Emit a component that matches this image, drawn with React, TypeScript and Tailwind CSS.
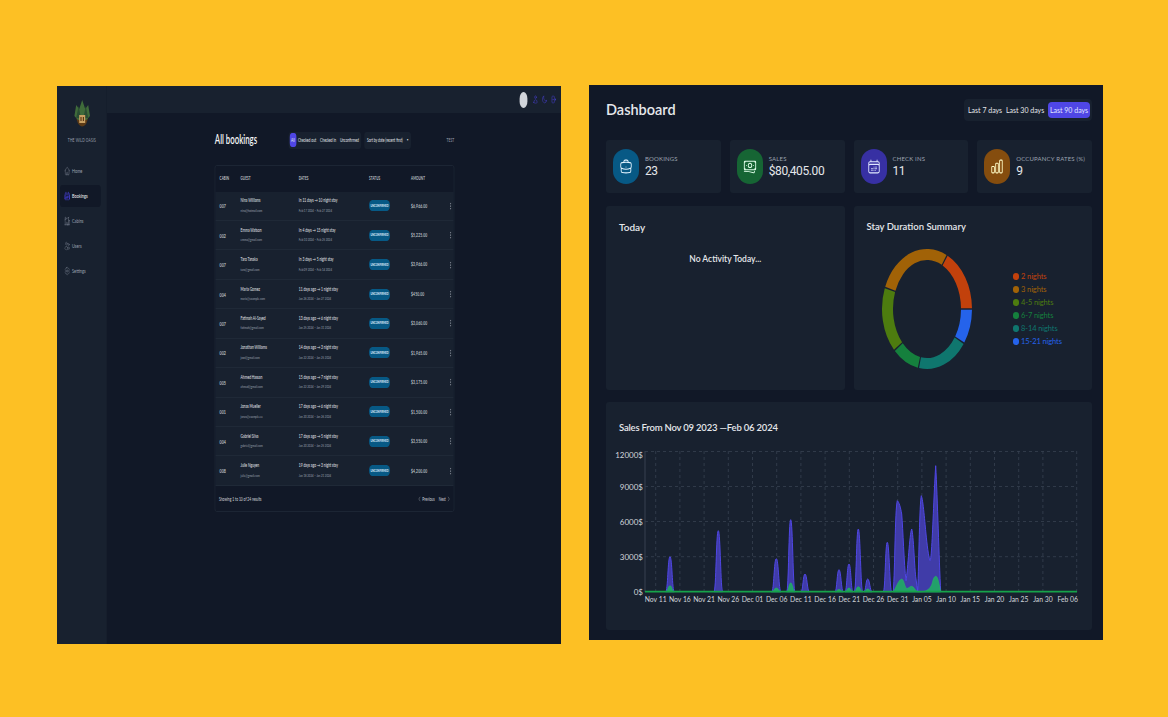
import React from 'react'
import {
  HiOutlineArrowRightOnRectangle,
  HiOutlineBanknotes,
  HiOutlineBriefcase,
  HiOutlineCalendarDays,
  HiOutlineChartBar,
  HiOutlineChevronLeft,
  HiOutlineChevronRight,
  HiOutlineCog6Tooth,
  HiOutlineEllipsisVertical,
  HiOutlineHome,
  HiOutlineHomeModern,
  HiOutlineMoon,
  HiOutlineUser,
  HiOutlineUsers,
} from 'react-icons/hi2'

const FONT = 'font-["Lato","Liberation_Sans",sans-serif]'

const NAV = [
  { label: 'Home', icon: HiOutlineHome },
  { label: 'Bookings', icon: HiOutlineCalendarDays, active: true },
  { label: 'Cabins', icon: HiOutlineHomeModern },
  { label: 'Users', icon: HiOutlineUsers },
  { label: 'Settings', icon: HiOutlineCog6Tooth },
]

const BOOKINGS = [
  ['007', 'Nina Williams', 'nina@hotmail.com', 'In 11 days → 10 night stay', 'Feb 17 2024 – Feb 27 2024', '$6,966.00'],
  ['002', 'Emma Watson', 'emma@gmail.com', 'In 4 days → 15 night stay', 'Feb 10 2024 – Feb 25 2024', '$5,225.00'],
  ['007', 'Taro Tanaka', 'taro@gmail.com', 'In 3 days → 5 night stay', 'Feb 09 2024 – Feb 14 2024', '$3,966.00'],
  ['004', 'Maria Gomez', 'maria@example.com', '11 days ago → 1 night stay', 'Jan 26 2024 – Jan 27 2024', '$450.00'],
  ['007', 'Fatimah Al-Sayed', 'fatimah@gmail.com', '13 days ago → 6 night stay', 'Jan 25 2024 – Jan 31 2024', '$3,060.00'],
  ['002', 'Jonathan Williams', 'jowi@gmail.com', '14 days ago → 3 night stay', 'Jan 22 2024 – Jan 25 2024', '$1,965.00'],
  ['005', 'Ahmed Hassan', 'ahmed@gmail.com', '15 days ago → 7 night stay', 'Jan 22 2024 – Jan 29 2024', '$3,175.00'],
  ['001', 'Jonas Mueller', 'jonas@example.eu', '17 days ago → 6 night stay', 'Jan 20 2024 – Jan 26 2024', '$1,500.00'],
  ['004', 'Gabriel Silva', 'gabriel@gmail.com', '17 days ago → 5 night stay', 'Jan 20 2024 – Jan 25 2024', '$3,550.00'],
  ['008', 'Julie Nguyen', 'julie@gmail.com', '19 days ago → 3 night stay', 'Jan 18 2024 – Jan 21 2024', '$4,200.00'],
]

const STATS = [
  { label: 'Bookings', value: '23', icon: HiOutlineBriefcase, circle: 'bg-[#075985] text-[#e0f2fe]' },
  { label: 'Sales', value: '$80,405.00', icon: HiOutlineBanknotes, circle: 'bg-[#166534] text-[#dcfce7]' },
  { label: 'Check ins', value: '11', icon: HiOutlineCalendarDays, circle: 'bg-[#3730a3] text-[#e0e7ff]' },
  { label: 'Occupancy rates (%)', value: '9', icon: HiOutlineChartBar, circle: 'bg-[#854d0e] text-[#fef9c3]' },
]

const SLICES = [
  { label: '2 nights', color: '#c2410c', from: 0, to: 63.5 },
  { label: '3 nights', color: '#a16207', from: 63.5, to: 159 },
  { label: '4-5 nights', color: '#4d7c0f', from: 159, to: 223.6 },
  { label: '6-7 nights', color: '#15803d', from: 223.6, to: 259 },
  { label: '8-14 nights', color: '#0f766e', from: 259, to: 325.2 },
  { label: '15-21 nights', color: '#2563eb', from: 325.2, to: 360 },
]

// x0, peak x, x1, peak y, in page pixels
const BLUE: number[][] = [
  [665.7, 670, 674.3, 557.7],
  [714, 718.3, 722.7, 531.7],
  [771.7, 776.3, 781, 559.7],
  [786.7, 790.7, 795, 520.7],
  [801, 805, 809.3, 575],
  [835, 839, 843.3, 570.7],
  [845, 849, 853, 565],
  [854.3, 858.3, 862.7, 530],
  [864, 867.7, 872, 580],
  [883.3, 887.3, 891.7, 543.3],
]

const GREEN: number[][] = [
  [665.7, 670, 674.3, 586.7],
  [771.7, 776.3, 781, 589],
  [786.7, 790.7, 795, 584],
  [835, 839, 843.3, 590.5],
  [845, 849, 853, 589],
  [854.3, 858.3, 862.7, 587.7],
  [864, 867.7, 872, 590],
]

const BASE = 592.7

const BLUE_CLUSTER = `M893.3 ${BASE} C895 570 895 510 897.3 501.7 C899 503 900.5 508 901.7 515 C903 530 904 565 906 581.7 C908 570 909.5 535 911.7 530 C913.5 535 914.5 570 916 580 L917.7 ${BASE} C919 560 919.5 505 921.3 496.7 C923 500 925 525 926 535 C927 545 928.5 558 930 561.7 C932 562 933.5 500 935.7 466.7 C937.5 500 939 560 940.7 ${BASE} Z`
const GREEN_CLUSTER = `M893 ${BASE} C896 590 898 581 901.7 580 C904 580 905 590 907 589.5 C909 589 910 587.3 911.7 587.3 C914 587.3 915 592 918 ${BASE} L922 ${BASE} C927 592 930 590 932 585 C933 581 934 577.3 935.7 577.3 C938 577.3 939 585 940.7 ${BASE} Z`

const spike = ([x0, xp, x1, yp]: number[]) => {
  const d = (xp - x0) / 2
  return `M${x0} ${BASE} C${x0 + d} ${BASE} ${xp - d} ${yp} ${xp} ${yp} C${xp + d} ${yp} ${x1 - d} ${BASE} ${x1} ${BASE} Z`
}

const X_LABELS = ['Nov 11', 'Nov 16', 'Nov 21', 'Nov 26', 'Dec 01', 'Dec 06', 'Dec 11', 'Dec 16', 'Dec 21', 'Dec 26', 'Dec 31', 'Jan 05', 'Jan 10', 'Jan 15', 'Jan 20', 'Jan 25', 'Jan 30']
const Y_LABELS = [
  ['12000$', 459],
  ['9000$', 490.7],
  ['6000$', 525.5],
  ['3000$', 560.7],
  ['0$', 596],
] as const

// the donut is stretched in the reference, so radii differ per axis
const polar = (rx: number, ry: number, deg: number) => {
  const a = (deg * Math.PI) / 180
  return `${50 + rx * Math.cos(a)} ${65 - ry * Math.sin(a)}`
}

const arc = (from: number, to: number) => {
  const a = from + 0.8
  const b = to - 0.8
  const large = b - a > 180 ? 1 : 0
  return `M${polar(45, 60, a)} A45 60 0 ${large} 0 ${polar(45, 60, b)} L${polar(34, 49, b)} A34 49 0 ${large} 1 ${polar(34, 49, a)} Z`
}

const Logo = () => (
  <svg viewBox="0 0 30 30" preserveAspectRatio="none" className="h-[30px] w-[30px]">
    <path d="M5 17 C7 31 23 31 25 17 Z" fill="#5b3a16" />
    <path d="M15 1 L20 10 L25 6 L28 17 L22 21 L8 21 L2 17 L5 6 L10 10 Z" fill="#3f6b3a" />
    <path d="M9 7 L13 19 L5 19 Z M21 7 L25 19 L17 19 Z" fill="#2a4d33" />
    <rect x="10" y="16" width="10" height="8" fill="#c9a063" />
    <rect x="12" y="18" width="2" height="4" fill="#5b3a16" />
    <rect x="16" y="18" width="2" height="4" fill="#5b3a16" />
  </svg>
)

const BookingsPanel = () => (
  <div className="mt-px h-[558px] w-[504px] shrink-0 overflow-hidden">
    {/* the reference shows this page squeezed sideways */}
    <div className="flex h-[558px] w-[840px] origin-top-left scale-x-[0.6] bg-[#111827] text-[#e5e7eb]">
      <aside className="flex w-[83px] shrink-0 flex-col items-center bg-[#18212f] pt-[13px]">
        <Logo />
        <p className="mt-[7px] text-[5.5px] tracking-[0.05em] text-[#9ca3af]">THE WILD OASIS</p>
        <nav className="mt-[16px] flex w-full flex-col gap-[3.3px] pl-[5px] pr-[10px]">
          {NAV.map((item) => (
            <div
              key={item.label}
              className={`flex h-[21.7px] items-center gap-[3px] rounded-sm pl-[7px] text-[6.5px] ${
                item.active ? 'bg-[#111827] text-[#f3f4f6]' : 'text-[#9ca3af]'
              }`}
            >
              <item.icon className={`h-[10px] w-[10px] ${item.active ? 'text-[#4f46e5]' : 'text-[#6b7280]'}`} />
              {item.label}
            </div>
          ))}
        </nav>
      </aside>

      <div className="flex min-w-0 flex-1 flex-col">
        <header className="flex h-[27px] items-center justify-end bg-[#18212f] pr-[8px]">
          <div className="mr-[9px] h-[16px] w-[13px] rounded-full bg-[#d1d5db]" />
          <div className="flex gap-[6px] text-[#4f46e5]">
            <HiOutlineUser className="h-[9px] w-[9px]" />
            <HiOutlineMoon className="h-[9px] w-[9px]" />
            <HiOutlineArrowRightOnRectangle className="h-[9px] w-[9px]" />
          </div>
        </header>

        <main className="flex flex-1 flex-col pl-[180px] pr-[178px] pt-[18px]">
          <div className="flex h-[18px] items-center">
            <h1 className="w-[122.5px] shrink-0 text-[13px] font-semibold text-[#f3f4f6]">All bookings</h1>
            <div className="flex h-[17px] w-[121px] shrink-0 items-center rounded-sm bg-[#18212f] pl-[2px] text-[5.5px] text-[#e5e7eb]">
              <span className="flex h-[14px] w-[11px] items-center justify-center rounded-sm bg-[#4f46e5]">All</span>
              <span className="ml-[3px] w-[37px] whitespace-nowrap">Checked out</span>
              <span className="w-[33px] whitespace-nowrap">Checked in</span>
              <span className="whitespace-nowrap">Unconfirmed</span>
            </div>
            <div className="ml-[5px] flex h-[17px] w-[78px] shrink-0 items-center justify-between rounded-sm bg-[#18212f] px-[5px] text-[5.5px] text-[#e5e7eb]">
              <span className="whitespace-nowrap">Sort by date (recent first)</span>
              <span className="text-[4px]">▾</span>
            </div>
            <span className="ml-auto text-[5.5px] text-[#9ca3af]">TEST</span>
          </div>

          <section className="mt-[16px] h-[347px] overflow-hidden rounded-[3px] border border-[#1f2937]">
            <div className="grid h-[25.5px] grid-cols-[35px_97px_117px_70px_61px_1fr] items-center bg-[#111827] pl-[7px] text-[5px] font-semibold uppercase tracking-[0.03em] text-[#d1d5db]">
              <span>Cabin</span>
              <span>Guest</span>
              <span>Dates</span>
              <span>Status</span>
              <span>Amount</span>
              <span />
            </div>
            {BOOKINGS.map((row, i) => (
              <div
                key={i}
                className="grid h-[29.45px] grid-cols-[35px_97px_117px_70px_61px_1fr] items-center border-b border-[#1f2937] bg-[#18212f] pl-[7px]"
              >
                <span className="text-[6px] font-semibold text-[#d1d5db]">{row[0]}</span>
                <div className="flex flex-col gap-[5px] leading-none">
                  <span className="whitespace-nowrap text-[5.5px] text-[#e5e7eb]">{row[1]}</span>
                  <span className="whitespace-nowrap text-[4.5px] text-[#9ca3af]">{row[2]}</span>
                </div>
                <div className="flex flex-col gap-[5px] leading-none">
                  <span className="whitespace-nowrap text-[5.5px] text-[#e5e7eb]">{row[3]}</span>
                  <span className="whitespace-nowrap text-[4.5px] text-[#9ca3af]">{row[4]}</span>
                </div>
                <span className="flex h-[11px] w-[35px] items-center justify-center rounded-full bg-[#075985] text-[4px] font-bold text-[#e0f2fe]">
                  UNCONFIRMED
                </span>
                <span className="whitespace-nowrap text-[5.5px] font-semibold tracking-[0.05em] text-[#d1d5db]">{row[5]}</span>
                <HiOutlineEllipsisVertical className="h-[10px] w-[10px] text-[#9ca3af]" />
              </div>
            ))}
            <div className="flex h-[26px] items-center justify-between bg-[#111827] pl-[6px] pr-[5px] text-[5.5px] text-[#d1d5db]">
              <span>Showing 1 to 10 of 24 results</span>
              <div className="flex items-center gap-[7px]">
                <span className="flex items-center gap-[2px]">
                  <HiOutlineChevronLeft className="h-[6px] w-[6px]" />
                  Previous
                </span>
                <span className="flex items-center gap-[2px]">
                  Next
                  <HiOutlineChevronRight className="h-[6px] w-[6px]" />
                </span>
              </div>
            </div>
          </section>
        </main>
      </div>
    </div>
  </div>
)

const SalesChart = () => (
  <svg viewBox="606 445 486 165" className="mt-[9px] block h-[165px] w-[486px]">
    <g stroke="#374151" strokeWidth="0.8" strokeDasharray="3 3">
      {[452.5, 487.5, 522.5, 557.7].map((y) => (
        <line key={y} x1="645" x2="1077" y1={y} y2={y} />
      ))}
      {X_LABELS.map((_, i) => (
        <line key={i} x1={655.7 + 24.2 * i} x2={655.7 + 24.2 * i} y1="452" y2="593" />
      ))}
      <line x1="1076.7" x2="1076.7" y1="452" y2="593" />
    </g>
    <line x1="645" x2="645" y1="452" y2="593" stroke="#374151" />
    <g fill="#403ca8" stroke="#4f46e5" strokeWidth="1">
      {BLUE.map((p) => (
        <path key={p[1]} d={spike(p)} />
      ))}
      <path d={BLUE_CLUSTER} />
    </g>
    <g fill="#23a06a" stroke="#22c55e" strokeWidth="0.5">
      {GREEN.map((p) => (
        <path key={p[1]} d={spike(p)} />
      ))}
      <path d={GREEN_CLUSTER} />
    </g>
    <line x1="645" x2="1077" y1={BASE} y2={BASE} stroke="#16a34a" strokeWidth="1.8" />
    <g fill="#d1d5db" fontSize="8" textAnchor="end">
      {Y_LABELS.map(([t, y]) => (
        <text key={t} x="643" y={y}>
          {t}
        </text>
      ))}
    </g>
    <g fill="#d1d5db" fontSize="6.8" textAnchor="middle">
      {X_LABELS.map((t, i) => (
        <text key={t} x={655.7 + 24.2 * i} y="603">
          {t}
        </text>
      ))}
      <text x="1078" y="603" textAnchor="end">
        Feb 06
      </text>
    </g>
  </svg>
)

const DashboardPanel = () => (
  <div className="flex h-[555px] w-[514px] shrink-0 flex-col bg-[#111827] pl-[17px] pr-[11px] pt-[14px] text-[#e5e7eb]">
    <div className="flex h-[22px] items-center justify-between">
      <h1 className="text-[14.5px] font-semibold text-[#e5e7eb]">Dashboard</h1>
      <div className="flex h-[22px] w-[128px] items-center justify-between rounded-sm bg-[#18212f] pl-[4px] pr-[2px] text-[7px]">
        <span className="whitespace-nowrap">Last 7 days</span>
        <span className="whitespace-nowrap">Last 30 days</span>
        <span className="flex h-[16px] w-[42px] items-center justify-center whitespace-nowrap rounded-sm bg-[#4f46e5] text-[#e0e7ff]">Last 90 days</span>
      </div>
    </div>

    <div className="mt-[19px] grid h-[53px] grid-cols-4 gap-[9px]">
      {STATS.map((s) => (
        <div key={s.label} className="flex items-center gap-[6px] rounded-[3px] bg-[#18212f] pl-[7px]">
          <div className={`flex h-[35px] w-[26px] shrink-0 items-center justify-center rounded-full ${s.circle}`}>
            <s.icon preserveAspectRatio="none" className="h-[17px] w-[14px]" />
          </div>
          <div className="flex flex-col gap-px">
            <span className="whitespace-nowrap text-[6px] uppercase leading-[8px] tracking-[0.03em] text-[#9ca3af]">{s.label}</span>
            <span className="font-['Roboto',sans-serif] text-[12px] leading-[15px] tracking-[-0.4px] text-[#e5e7eb]">{s.value}</span>
          </div>
        </div>
      ))}
    </div>

    <div className="mt-[13px] grid h-[184px] grid-cols-2 gap-[9px]">
      <div className="rounded-[3px] bg-[#18212f] pl-[13px] pt-[14px]">
        <h2 className="text-[10px] font-semibold leading-[14px] text-[#e5e7eb]">Today</h2>
        <p className="mt-[19px] pr-[13px] text-center text-[8.5px] font-semibold leading-[12px]">No Activity Today...</p>
      </div>
      <div className="rounded-[3px] bg-[#18212f] pt-[14px]">
        <h2 className="pl-[13px] text-[9.5px] font-semibold leading-[14px] text-[#e5e7eb]">Stay Duration Summary</h2>
        <div className="mt-[10px] flex items-center">
          <svg viewBox="0 0 100 130" className="ml-[23px] h-[130px] w-[100px] shrink-0">
            {SLICES.map((s) => (
              <path key={s.label} d={arc(s.from, s.to)} fill={s.color} />
            ))}
          </svg>
          <ul className="ml-[36px] flex flex-col text-[7.5px] leading-[13px] tracking-[-0.1px]">
            {SLICES.map((s) => (
              <li key={s.label} className="flex items-center gap-[2px] whitespace-nowrap" style={{ color: s.color }}>
                <span className="h-[6.5px] w-[6.5px] rounded-full" style={{ backgroundColor: s.color }} />
                {s.label}
              </li>
            ))}
          </ul>
        </div>
      </div>
    </div>

    <div className="mt-[12px] h-[228px] rounded-[3px] bg-[#18212f] pt-[19px]">
      <h2 className="pl-[13px] text-[9.5px] font-semibold leading-[14px] tracking-[-0.2px] text-[#e5e7eb]">Sales From Nov 09 2023 —Feb 06 2024</h2>
      <SalesChart />
    </div>
  </div>
)

export default function App() {
  return (
    <div className={`flex h-[717px] items-start gap-[28px] overflow-hidden bg-[#fdc024] pl-[57px] pt-[85px] ${FONT}`}>
      <BookingsPanel />
      <DashboardPanel />
    </div>
  )
}
